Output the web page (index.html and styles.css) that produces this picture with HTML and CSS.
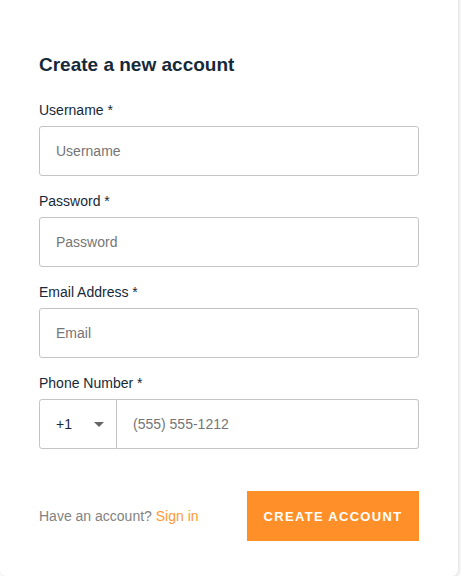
FILE: index.html
```html
<!DOCTYPE html>
<html>
<head>
<meta charset="utf-8">
<link rel="stylesheet" href="styles.css">
</head>
<body>
<div class="card">
  <div class="title">Create a new account</div>
  <div class="field">
    <div class="label">Username *</div>
    <input class="input" placeholder="Username">
  </div>
  <div class="field">
    <div class="label">Password *</div>
    <input class="input" placeholder="Password">
  </div>
  <div class="field">
    <div class="label">Email Address *</div>
    <input class="input" placeholder="Email">
  </div>
  <div class="field">
    <div class="label">Phone Number *</div>
    <div class="phone">
      <div class="dial"><span>+1</span><span class="caret"></span></div>
      <input class="input phone-input" placeholder="(555) 555-1212">
    </div>
  </div>
  <div class="footer">
    <div class="hint">Have an account? <a class="link">Sign in</a></div>
    <button class="btn">Create Account</button>
  </div>
</div>
</body>
</html>
```

FILE: styles.css
```css
html, body { margin: 0; padding: 0; background: #fff; }
body { font-family: "Liberation Sans", Arial, sans-serif; color: #152939; }
.card {
  width: 380px;
  margin-top: -10px;
  padding: 64px 39px 35px 39px;
  background: #fff;
  border-radius: 6px;
  box-shadow: 1px 1px 4px rgba(0,0,0,0.15);
}
.title { font-size: 19px; font-weight: bold; line-height: 21px; margin-bottom: 27px; }
.field { margin-bottom: 17px; }
.label { font-size: 14px; line-height: 16px; margin-bottom: 8px; }
.input {
  display: block;
  box-sizing: border-box;
  width: 100%;
  height: 50px;
  padding: 16px;
  border: 1px solid #c4c4c4;
  border-radius: 3px;
  font-family: inherit;
  font-size: 14px;
  color: #152939;
  outline: none;
  background: #fff;
}
.input::placeholder { color: #757575; }
.phone { display: flex; }
.dial {
  box-sizing: border-box;
  width: 78px;
  height: 50px;
  border: 1px solid #c4c4c4;
  border-radius: 3px 0 0 3px;
  display: flex;
  align-items: center;
  justify-content: space-between;
  padding: 0 12px 0 16px;
  font-size: 14px;
  color: #152939;
}
.caret {
  width: 0; height: 0;
  border-left: 5px solid transparent;
  border-right: 5px solid transparent;
  border-top: 5px solid #666;
  margin-top: 1px;
}
.phone-input { flex: 1; border-left: none; border-radius: 0 3px 3px 0; }
.footer {
  display: flex;
  justify-content: space-between;
  align-items: center;
  margin-top: 42px;
}
.hint { font-size: 14px; color: #828282; }
.link { color: #ff9933; }
.btn {
  width: 172px;
  height: 50px;
  border: none;
  background: #ff9029;
  color: #fff;
  font-family: inherit;
  font-size: 13px;
  font-weight: bold;
  letter-spacing: 1.3px;
  text-transform: uppercase;
  padding: 0;
}
```
